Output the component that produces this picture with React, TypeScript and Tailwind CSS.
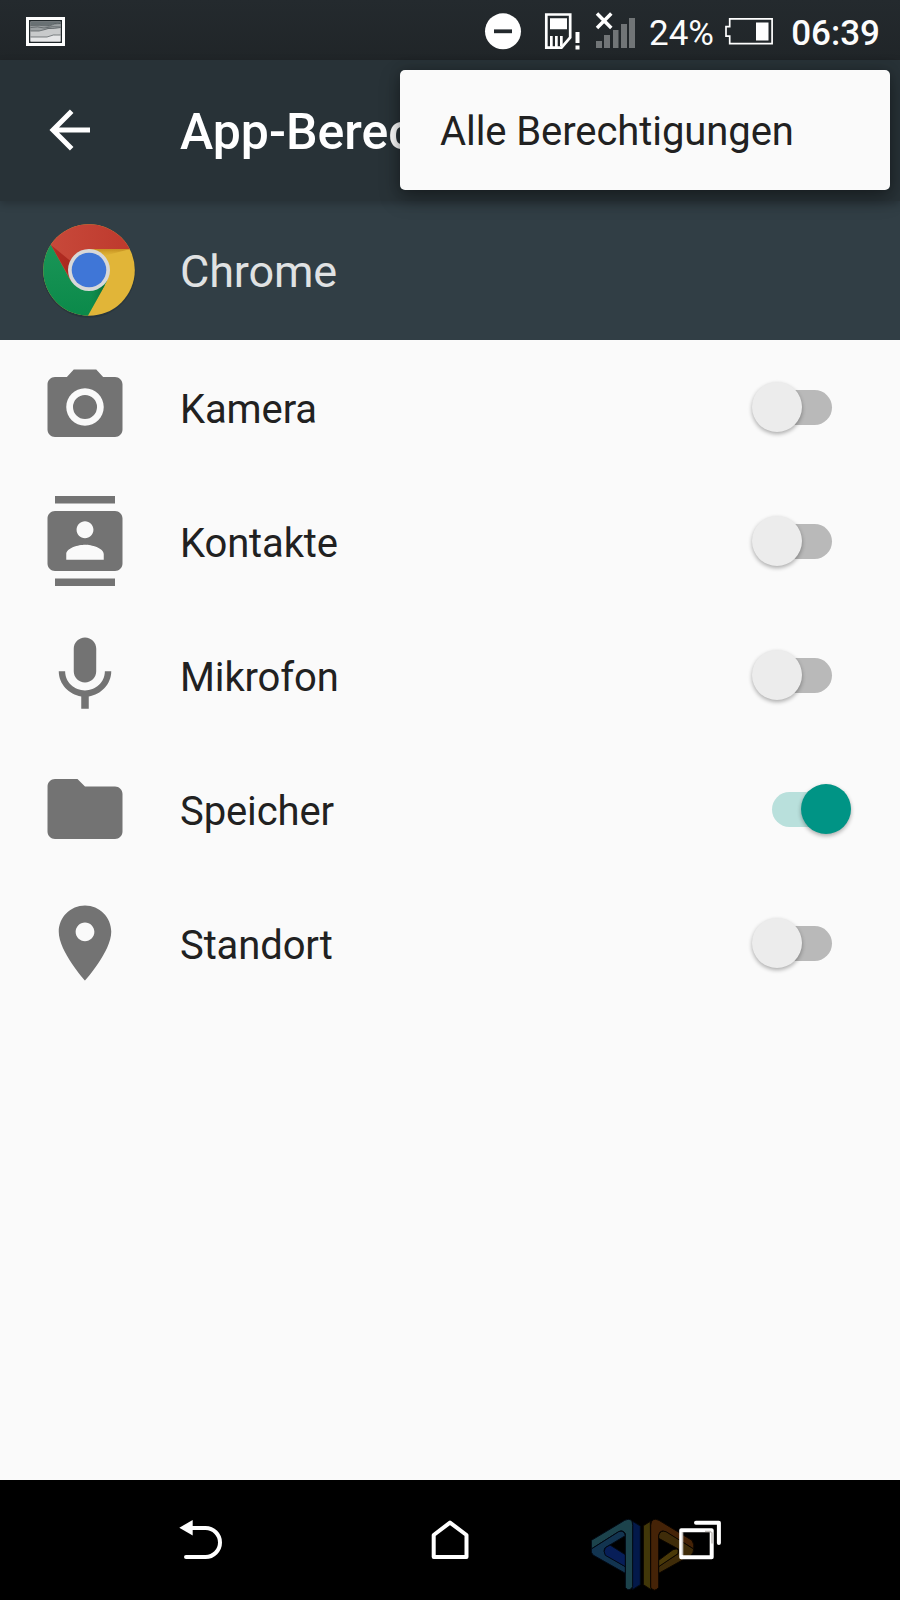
import React, { useState } from "react";

const icons = {
  camera:
    "M12 8.8a3.2 3.2 0 1 0 0 6.4a3.2 3.2 0 1 0 0-6.4zM9 2L7.17 4H4c-1.1 0-2 .9-2 2v12c0 1.1.9 2 2 2h16c1.1 0 2-.9 2-2V6c0-1.1-.9-2-2-2h-3.17L15 2H9zm3 15c-2.76 0-5-2.24-5-5s2.24-5 5-5 5 2.24 5 5-2.24 5-5 5z",
  contacts:
    "M20 0H4v2h16V0zM4 24h16v-2H4v2zM20 4H4c-1.1 0-2 .9-2 2v12c0 1.1.9 2 2 2h16c1.1 0 2-.9 2-2V6c0-1.1-.9-2-2-2zm-8 2.75c1.24 0 2.25 1.01 2.25 2.25s-1.01 2.25-2.25 2.25S9.75 10.24 9.75 9 10.76 6.75 12 6.75zM17 17H7v-1.5c0-1.67 3.33-2.5 5-2.5s5 .83 5 2.5V17z",
  mic: "M12 14c1.66 0 2.99-1.34 2.99-3L15 5c0-1.66-1.34-3-3-3S9 3.34 9 5v6c0 1.66 1.34 3 3 3zm5.3-3c0 3-2.54 5.1-5.3 5.1S6.7 14 6.7 11H5c0 3.41 2.72 6.23 6 6.72V21h2v-3.28c3.28-.48 6-3.3 6-6.72h-1.7z",
  folder:
    "M10 4H4c-1.1 0-1.99.9-1.99 2L2 18c0 1.1.9 2 2 2h16c1.1 0 2-.9 2-2V8c0-1.1-.9-2-2-2h-8l-2-2z",
  place:
    "M12 2C8.13 2 5 5.13 5 9c0 5.25 7 13 7 13s7-7.75 7-13c0-3.87-3.13-7-7-7zm0 9.5c-1.38 0-2.5-1.12-2.5-2.5s1.12-2.5 2.5-2.5 2.5 1.12 2.5 2.5-1.12 2.5-2.5 2.5z",
};

type Permission = { name: string; icon: keyof typeof icons; granted: boolean };

const initial: Permission[] = [
  { name: "Kamera", icon: "camera", granted: false },
  { name: "Kontakte", icon: "contacts", granted: false },
  { name: "Mikrofon", icon: "mic", granted: false },
  { name: "Speicher", icon: "folder", granted: true },
  { name: "Standort", icon: "place", granted: false },
];

function StatusBar() {
  return (
    <div className="flex h-[60px] items-center bg-[linear-gradient(#242a2e,#202528)] pl-[26px] pr-[20px] text-[#fcfcfc]">
      <svg className="mt-[3px] h-[29px] w-[39px]" viewBox="0 0 39 29">
        <rect x="1.5" y="1.5" width="36" height="26" fill="#20272a" stroke="#fff" strokeWidth="3" />
        <rect x="4.5" y="4.5" width="30" height="20" fill="#d3d5d6" />
        <path d="M4.500 4.500H34.500V7Q29 6 23 9Q14 8 4.500 8.500z" fill="#697174" />
        <path d="M4.500 8.500Q14 8 23 9Q29 6 34.500 7V10.500Q22 12 13 14H4.500z" fill="#9ba0a2" />
        <path d="M4.500 14H13Q22 12 34.500 10.500V18Q26 17 21 20H4.500z" fill="#c8cacb" />
        <path d="M4.500 20H21Q27 17 34.500 18V24.500H4.500z" fill="#e5e6e7" />
        <path d="M4.500 8.500Q14 8 23 9Q29 6 34.500 6.500M4.500 10.500Q12 9 18 11Q26 9 34.500 10M4.500 14H13Q18 13 22 11.500Q28 12 34.500 10.500M4.500 20H21Q27 17 34.500 18" fill="none" stroke="#4d5558" strokeWidth=".7" />
      </svg>
      <div className="flex-1" />
      <svg className="h-[60px] w-[175px]" viewBox="465 0 175 60">
        <circle cx="503" cy="31.300" r="18" fill="#fff" />
        <rect x="494" y="29.400" width="18" height="3.800" fill="#23292d" />
        <path d="M546.300 14.500H570.200V37.500L561.500 47.700H546.300z" fill="none" stroke="#fff" strokeWidth="2.700" />
        <path d="M550 18.300h17v11h-17zM550 36h2.700v11H550zM555 36h2.700v11H555zM560 36h2.700v10H560zM575.500 32h4v11h-4zM575.500 45.500h4v4h-4z" fill="#fff" />
        <path d="M597 13.500L611.300 28M611.300 13.500L597 28" fill="none" stroke="#fff" strokeWidth="3.500" />
        <path d="M596 41h6v7h-6zM604 35h6v13h-6zM613 30h5.500v18H613zM621 24h6v24h-6zM629 18h6v30h-6z" fill="#717577" />
      </svg>
      <span className="w-[75px] shrink-0 pl-[9px] pt-[6px] text-[35px] leading-none">24%</span>
      <svg className="ml-[9px] h-[60px] w-[50px] shrink-0" viewBox="724 0 50 60">
        <path d="M729.700 18.900H772.100V43.600H729.700V36.200H726V26.600H729.700z" fill="none" stroke="#fff" strokeWidth="1.700" />
        <rect x="756" y="22.500" width="12.500" height="18" fill="#fff" />
      </svg>
      <span className="ml-[17px] w-[89px] shrink-0 pt-[6px] text-right text-[35px] font-medium leading-none">06:39</span>
    </div>
  );
}

function ChromeLogo() {
  return (
    <svg className="h-[100px] w-[100px] shrink-0" viewBox="38.500 220 100 100">
      <defs>
        <clipPath id="disc"><circle cx="88.500" cy="270" r="45.800" /></clipPath>
        <linearGradient id="red" x1="0" x2="1"><stop stopColor="#c94b3c" /><stop offset="1" stopColor="#bd382c" /></linearGradient>
        <linearGradient id="green" x2="0" y2="1"><stop stopColor="#1b9658" /><stop offset="1" stopColor="#0a8949" /></linearGradient>
        <linearGradient id="redShade" x1="0" y1="0" x2="1" y2=".3"><stop stopColor="#b52c22" /><stop offset="1" stopColor="#a8261d" stopOpacity=".9" /></linearGradient>
        <linearGradient id="yellowShade" x2="0" y2="1"><stop stopColor="#c48f1f" /><stop offset="1" stopColor="#e1b538" stopOpacity="0" /></linearGradient>
        <linearGradient id="greenShade" x1="1" x2="0"><stop stopColor="#086b36" /><stop offset="1" stopColor="#0f8e4d" stopOpacity="0" /></linearGradient>
      </defs>
      <circle cx="88.500" cy="271.200" r="46.500" fill="#1d282d" opacity=".35" />
      <g clipPath="url(#disc)">
        <rect x="42" y="223" width="93" height="94" fill="#e1b538" />
        <path d="M40 220H137V249.300H88.500L70 281L50 245L40 240z" fill="url(#red)" />
        <path d="M50.500 245L70 280.500L106.500 281L87.300 316L80 320H38V240z" fill="url(#green)" />
        <path d="M50.500 245L68.500 276.500L70 261z" fill="url(#redShade)" />
        <path d="M94 249.300H129L107 255L101 258z" fill="url(#yellowShade)" />
        <path d="M91 290L104.500 285L87.300 316z" fill="url(#greenShade)" />
      </g>
      <circle cx="88.500" cy="270" r="21" fill="#d8d8d8" />
      <circle cx="88.500" cy="270" r="17.300" fill="#3f76d7" />
    </svg>
  );
}

function Toggle({ on, label, onClick }: { on: boolean; label: string; onClick: () => void }) {
  return (
    <button
      role="switch"
      aria-checked={on}
      aria-label={label}
      onClick={onClick}
      className={`relative flex h-[50px] w-[100px] items-center ${on ? "justify-end pr-px" : "justify-start"}`}
    >
      <span className={`absolute left-[20px] h-[35px] w-[60px] rounded-full ${on ? "bg-[#b9e0dc]" : "bg-[#b9b9b9]"}`} />
      <span className={`relative size-[50px] rounded-full shadow-[0_2px_4px_rgba(0,0,0,0.32)] ${on ? "bg-[#009485]" : "bg-[#ececec]"}`} />
    </button>
  );
}

function Watermark() {
  return (
    <svg className="pointer-events-none absolute left-[570px] top-[10px] h-[110px] w-[180px]" viewBox="0 0 540 330">
      <g stroke="#020914" strokeWidth="3" strokeLinejoin="round">
        <path d="M188 94L211 108V284L187 299z" fill="#03194a" />
        <path d="M64 177V151L164 91Q188 80 188 106V290Q177 308 166 292V131Q158 118 146 125z" fill="#1c434c" />
        <path d="M64 177L146 125Q162 119 166 137L106 173Q99 180 106 193L166 230V250L69 195Q62 188 64 177z" fill="#123450" />
        <path d="M106 173L120 165L166 194V230L106 196Q99 184 106 173z" fill="#071e58" />
      </g>
      <g stroke="#0b0500" strokeWidth="3" strokeLinejoin="round">
        <path d="M241 94L220 107V284L243 299z" fill="#413709" />
        <path d="M242 106Q244 80 267 91L366 151Q374 164 371 177L285 125Q269 118 266 137V292Q253 309 242 292z" fill="#452307" />
        <path d="M266 137Q271 119 288 125L371 177Q371 190 361 197L266 250V229L324 191L325 177L266 145z" fill="#3f2c09" />
        <path d="M266 211L309 179Q321 174 325 180L324 191L266 230z" fill="#4a3908" />
      </g>
    </svg>
  );
}

function NavBar() {
  return (
    <nav className="relative h-[120px] bg-black">
      <Watermark />
      <div className="relative flex h-full items-center justify-between px-[175px]">
        <button aria-label="Zurück">
          <svg className="h-[50px] w-[50px]" viewBox="175 1515 50 50">
            <path d="M192 1528H205.500A14.500 14.500 0 0 1 205.500 1557H186" fill="none" stroke="#fff" strokeWidth="4" strokeLinecap="round" />
            <path d="M179.300 1527.700L192.700 1520V1535.500z" fill="#fff" />
          </svg>
        </button>
        <button aria-label="Startseite">
          <svg className="h-[50px] w-[50px]" viewBox="425 1515 50 50">
            <path d="M433.700 1535L450 1522.600L466.500 1535V1557H433.700z" fill="none" stroke="#fff" strokeWidth="4" strokeLinejoin="round" />
          </svg>
        </button>
        <button aria-label="Letzte Apps">
          <svg className="h-[50px] w-[50px]" viewBox="675 1515 50 50">
            <rect x="681.200" y="1530.300" width="30.500" height="27" fill="none" stroke="#fff" strokeWidth="4" strokeLinejoin="round" />
            <path d="M696 1522.800H718.900V1543" fill="none" stroke="#fff" strokeWidth="4" strokeLinecap="round" strokeLinejoin="round" />
            <path d="M682.500 1532V1555M705 1531.500H710L712 1533V1543.500" fill="none" stroke="#776f66" strokeWidth="1.500" opacity=".45" />
          </svg>
        </button>
      </div>
    </nav>
  );
}

export default function App() {
  const [permissions, setPermissions] = useState(initial);
  const toggle = (index: number) =>
    setPermissions((list) => list.map((p, i) => (i === index ? { ...p, granted: !p.granted } : p)));

  return (
    <div className="relative flex h-[1600px] w-[900px] flex-col overflow-hidden bg-[#fafafa] font-[Roboto,sans-serif]">
      <StatusBar />
      <header className="relative flex h-[141px] shrink-0 items-center bg-[#283237] pl-[49px] shadow-[0_3px_8px_rgba(0,0,0,0.22)]">
        <svg className="-mt-px h-[42px] w-[42px]" viewBox="49 109 42 42">
          <path d="M90 130H54M71.700 111.300L53 130L71.700 148.700" fill="none" stroke="#fff" strokeWidth="5" />
        </svg>
        <h1 className="ml-[89px] mt-[3px] w-[230px] overflow-hidden whitespace-nowrap py-2 text-[50px] font-medium leading-none text-white">App-Berechtigungen</h1>
      </header>
      <section className="flex h-[139px] shrink-0 items-center bg-[#313e45] pl-[39px]">
        <div className="-mt-px">
          <ChromeLogo />
        </div>
        <span className="ml-[41px] mt-[2px] text-[45px] leading-none tracking-[-0.15px] text-[#e0e2e3]">Chrome</span>
      </section>
      <main className="flex-1">
        {permissions.map((p, i) => (
          <div key={p.name} className="flex h-[134px] items-center pl-[40px] pr-[48px]">
            <svg className="size-[90px] fill-[#737373]" viewBox="0 0 24 24">
              <path d={icons[p.icon]} />
            </svg>
            <span className="ml-[50px] mt-[5px] flex-1 text-[40px] leading-none tracking-[-0.12px] text-[#212121]">{p.name}</span>
            <Toggle on={p.granted} label={p.name} onClick={() => toggle(i)} />
          </div>
        ))}
      </main>
      <NavBar />
      <div role="menu" className="absolute left-[400px] top-[70px] flex h-[120px] w-[490px] items-center rounded-[5px] bg-[#fafafa] pl-[40px] shadow-[0_8px_20px_rgba(0,0,0,0.35),0_0_12px_rgba(0,0,0,0.18)]">
        <span role="menuitem" className="mt-[3px] text-[40px] leading-none tracking-[-0.08px] text-[#212121]">Alle Berechtigungen</span>
      </div>
    </div>
  );
}
